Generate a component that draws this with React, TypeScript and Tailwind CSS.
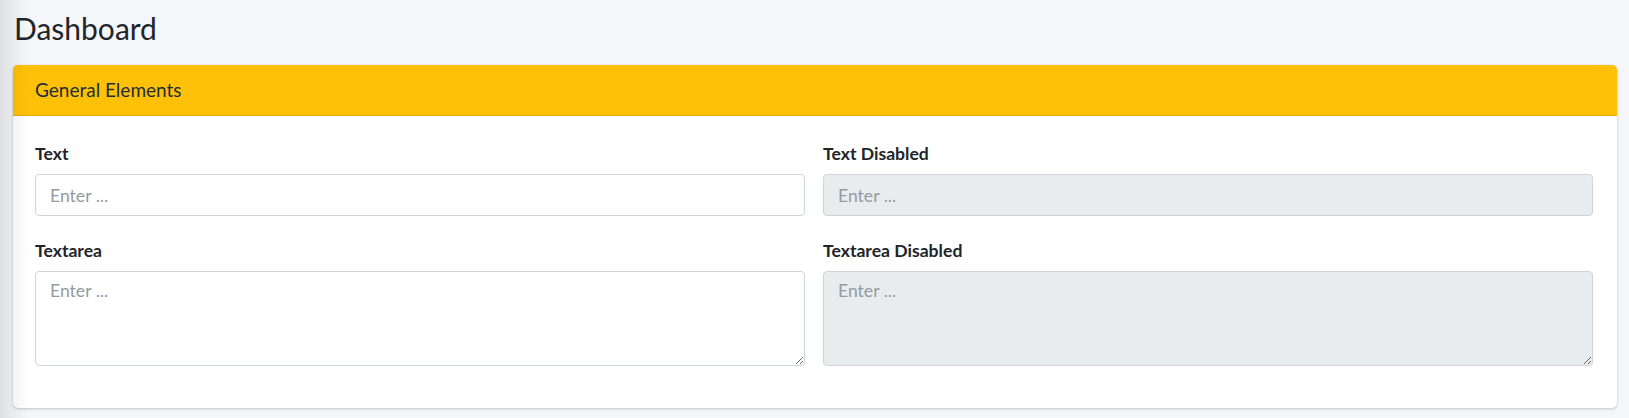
import React from "react";

const font = { fontFamily: '"Source Sans Pro", Lato, "Noto Sans", sans-serif' };

function Field({ label, disabled, area }: { label: string; disabled?: boolean; area?: boolean }) {
  const base =
    "block w-full rounded-[4px] border border-[#ced4da] px-[14px] text-[17.6px] text-[#495057] placeholder:text-[#939ba2] outline-none";
  const bg = disabled ? "bg-[#e9ecef]" : "bg-white";
  return (
    <div className="flex flex-col">
      <label className="mb-[8px] text-[17.6px] leading-[24px] font-bold text-[#212529]">{label}</label>
      {area ? (
        <textarea
          disabled={disabled}
          placeholder="Enter ..."
          className={`${base} ${bg} h-[95px] pt-[6px] leading-[26px]`}
        />
      ) : (
        <input
          disabled={disabled}
          placeholder="Enter ..."
          className={`${base} ${bg} h-[42px] leading-[26px]`}
        />
      )}
    </div>
  );
}

export default function App() {
  return (
    <div className="relative min-h-[418px] overflow-hidden bg-[#f4f6f9] pl-[13px] pr-[12px]" style={font}>
      {/* sidebar shadow */}
      <div className="pointer-events-none absolute left-0 top-0 z-10 h-full w-[28px] bg-gradient-to-r from-[rgba(0,0,0,0.09)] to-transparent" />

      <h1 className="pl-[1px] pt-[9px] text-[30px] leading-[38px] font-normal text-[#212529]">Dashboard</h1>

      <div className="mt-[18px] overflow-hidden rounded-[5px] bg-white shadow-[0_0_1px_rgba(0,0,0,0.125),0_1px_3px_rgba(0,0,0,0.2)]">
        <div className="flex h-[51px] items-center border-b border-[#e0a800] bg-[#ffc107] px-[22px]">
          <h3 className="text-[19px] font-normal text-[#1f2d3d]">General Elements</h3>
        </div>
        <div className="grid grid-cols-2 gap-x-[18px] gap-y-[23px] pl-[22px] pr-[24px] pt-[26px] pb-[42px]">
          <Field label="Text" />
          <Field label="Text Disabled" disabled />
          <Field label="Textarea" area />
          <Field label="Textarea Disabled" disabled area />
        </div>
      </div>
    </div>
  );
}
